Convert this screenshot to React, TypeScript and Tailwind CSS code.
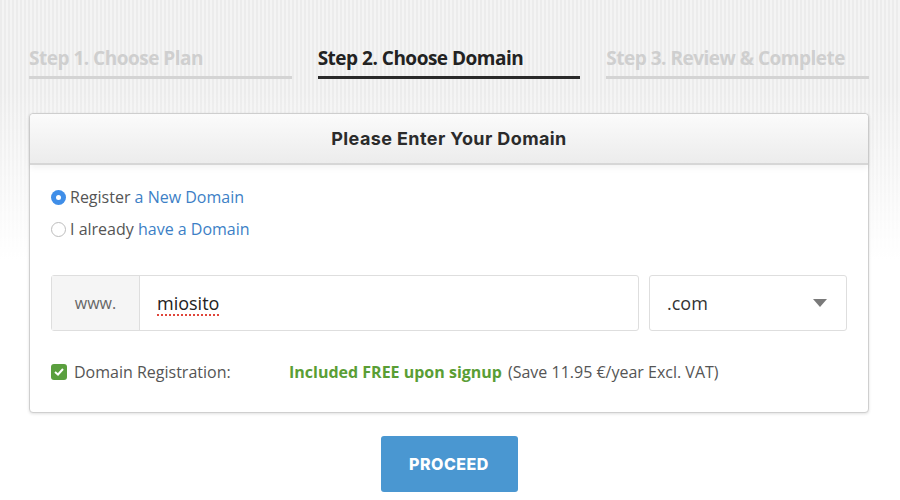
import React from 'react';

const steps = [
  { label: 'Step 1. Choose Plan', active: false },
  { label: 'Step 2. Choose Domain', active: true },
  { label: 'Step 3. Review & Complete', active: false },
];

const App: React.FC = () => {
  return (
    <div className="min-h-[500px] w-full bg-[linear-gradient(180deg,rgba(255,255,255,0)_0px,rgba(255,255,255,0)_90px,rgba(255,255,255,1)_260px),repeating-linear-gradient(90deg,#ececec_0px,#ececec_2px,#f4f4f4_2px,#f4f4f4_4px)] font-['Open_Sans',sans-serif]">
      <div className="ml-[29px] w-[840px] pt-[46px]">
        {/* steps */}
        <div className="grid grid-cols-3 gap-[26px]">
          {steps.map((step, index) => (
            <div key={index}>
              <div
                className={
                  'text-[19px] leading-[25px] font-bold tracking-[-0.5px] ' +
                  (step.active ? 'text-[#222]' : 'text-[#cfcfcf]')
                }
              >
                {step.label}
              </div>
              <div className={'mt-[5px] h-[3px] ' + (step.active ? 'bg-[#2a2a2a]' : 'bg-[#d4d4d4]')}></div>
            </div>
          ))}
        </div>

        {/* card */}
        <div className="mt-[34px] rounded-[4px] border border-[#cfcfcf] bg-white shadow-[0_1px_3px_rgba(0,0,0,0.12)]">
          <div className="flex h-[51px] items-center justify-center rounded-t-[4px] border-b-2 border-[#d6d6d6] bg-[linear-gradient(180deg,#fbfbfb,#ececec)] shadow-[0_3px_6px_rgba(0,0,0,0.05)]">
            <h2 className="text-[18px] font-bold text-[#2b2b2b] font-['Inter',sans-serif] tracking-[0.4px]">Please Enter Your Domain</h2>
          </div>

          <div className="px-[21px] pt-[20px] pb-[28px] text-[16px] text-[#555]">
            <label className="flex items-center h-[24px]">
              <span className="flex h-[15px] w-[15px] items-center justify-center rounded-full bg-[#3f8ee8]">
                <span className="h-[5px] w-[5px] rounded-full bg-white"></span>
              </span>
              <span className="ml-[4px]">Register <span className="text-[#3d7fc6]">a New Domain</span></span>
            </label>
            <label className="mt-[8px] flex items-center h-[24px]">
              <span className="h-[15px] w-[15px] rounded-full border border-[#bdbdbd] bg-white"></span>
              <span className="ml-[4px]">I already <span className="text-[#3d7fc6]">have a Domain</span></span>
            </label>

            <div className="mt-[34px] flex gap-[10px]">
              <div className="flex h-[56px] flex-1 rounded-[3px] border border-[#dedede]">
                <div className="flex w-[88px] items-center justify-center border-r border-[#dedede] bg-[#f5f5f5] text-[#666]">www.</div>
                <div className="flex flex-1 items-center pl-[17px] text-[18px] text-[#222]">
                  <span className="underline decoration-dotted decoration-[#e0453a] decoration-2 underline-offset-[5px]">miosito</span>
                </div>
              </div>
              <div className="flex h-[56px] w-[198px] items-center justify-between rounded-[3px] border border-[#dedede] pl-[17px] pr-[19px] text-[18px] text-[#333]">
                <span>.com</span>
                <svg width="14" height="8" viewBox="0 0 14 8"><path d="M0 0 L14 0 L7 8 Z" fill="#7a7a7a" /></svg>
              </div>
            </div>

            <div className="mt-[29px] flex items-center h-[24px]">
              <span className="flex h-[16px] w-[16px] items-center justify-center rounded-[3px] bg-[#5a9f3e]">
                <svg width="10" height="8" viewBox="0 0 10 8"><path d="M1 4 L4 6.5 L9 1" stroke="#fff" strokeWidth="2" fill="none" /></svg>
              </span>
              <span className="ml-[7px] w-[215px]">Domain Registration:</span>
              <span className="font-bold text-[#5a9e35]">Included FREE upon signup</span>
              <span className="ml-[6px]">(Save 11.95 €/year Excl. VAT)</span>
            </div>
          </div>
        </div>

        <div className="mt-[23px] flex justify-center">
          <button className="h-[56px] w-[137px] rounded-[3px] bg-[#4a97d1] text-[16px] font-extrabold tracking-[0.5px] text-white font-['Inter',sans-serif]">
            PROCEED
          </button>
        </div>
      </div>
    </div>
  );
};

export default App;
